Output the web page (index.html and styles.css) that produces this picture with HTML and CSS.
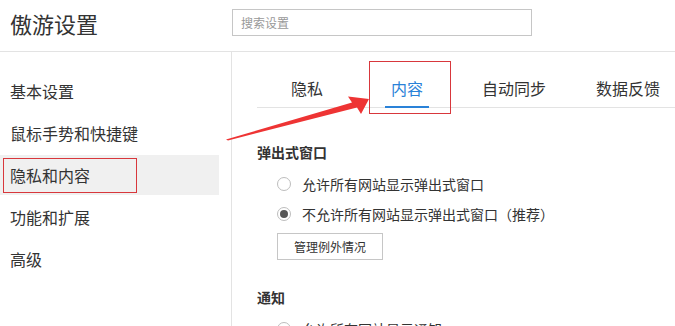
FILE: index.html
```html
<!DOCTYPE html>
<html lang="zh-CN">
<head>
<meta charset="utf-8">
<title>傲游设置</title>
<link rel="stylesheet" href="styles.css">
</head>
<body>
<div class="page">
  <header class="header">
    <div class="brand">傲游设置</div>
    <div class="search">搜索设置</div>
  </header>
  <div class="body">
    <nav class="sidebar">
      <div class="nav-item">基本设置</div>
      <div class="nav-item">鼠标手势和快捷键</div>
      <div class="nav-item active">隐私和内容</div>
      <div class="nav-item">功能和扩展</div>
      <div class="nav-item">高级</div>
    </nav>
    <main class="main">
      <div class="tabs">
        <div class="tab"><span class="tab-label">隐私</span></div>
        <div class="tab active"><span class="tab-label">内容</span></div>
        <div class="tab"><span class="tab-label">自动同步</span></div>
        <div class="tab"><span class="tab-label">数据反馈</span></div>
      </div>
      <section class="section">
        <h3 class="section-title">弹出式窗口</h3>
        <div class="options">
          <div class="option"><span class="radio"></span><span>允许所有网站显示弹出式窗口</span></div>
          <div class="option"><span class="radio checked"></span><span>不允许所有网站显示弹出式窗口<span class="paren">（</span>推荐<span class="paren">）</span></span></div>
          <button class="btn">管理例外情况</button>
        </div>
      </section>
      <section class="section second">
        <h3 class="section-title">通知</h3>
        <div class="options">
          <div class="option"><span class="radio"></span><span>允许所有网站显示通知</span></div>
        </div>
      </section>
    </main>
  </div>
  <div class="mark mark-nav"></div>
  <div class="mark mark-tab"></div>
  <svg class="arrow" width="675" height="326" viewBox="0 0 675 326">
    <polygon points="226,139.5 352,102.5 348,96.5 369,99 361,114 357,107.5 228,140.5" fill="#ee3434"/>
  </svg>
</div>
</body>
</html>
```
FILE: styles.css
```css
* { box-sizing: border-box; }
html, body { margin: 0; padding: 0; background: #fff; }
body {
  font-family: "Noto Sans CJK SC", "Noto Sans", sans-serif;
  color: #333;
  width: 675px;
  height: 326px;
  overflow: hidden;
}
.page { position: relative; width: 675px; height: 326px; overflow: hidden; }

.header {
  display: flex;
  align-items: flex-start;
  height: 52px;
  border-bottom: 1px solid #e3e3e3;
}
.brand {
  width: 232px;
  padding-left: 10px;
  margin-top: 8px;
  font-size: 22px;
  line-height: 30px;
  color: #333;
}
.search {
  margin-top: 9px;
  width: 300px;
  height: 27px;
  border: 1px solid #c6c6c6;
  font-size: 12px;
  line-height: 25px;
  padding-left: 8px;
  color: #999;
}

.body { display: flex; height: 274px; }
.sidebar {
  width: 232px;
  flex: none;
  border-right: 1px solid #e3e3e3;
  padding-top: 19px;
  padding-right: 12px;
}
.nav-item {
  height: 40px;
  line-height: 40px;
  margin-bottom: 2px;
  padding-left: 10px;
  font-size: 16px;
  color: #333;
}
.nav-item.active { background: #f0f0f0; }

.main { flex: 1; min-width: 0; padding-left: 25px; overflow: hidden; }
.tabs {
  display: flex;
  flex-wrap: nowrap;
  margin-top: 18px;
  border-bottom: 1px solid #e3e3e3;
}
.tab {
  flex: none;
  min-width: 100px;
  padding: 0 19px;
  display: flex;
  justify-content: center;
  white-space: nowrap;
}
.tab-label {
  display: block;
  padding: 0 6px;
  font-size: 16px;
  line-height: 36px;
  border-bottom: 2px solid transparent;
  margin-bottom: -1px;
  color: #333;
}
.tab.active .tab-label { color: #2a82d8; border-bottom-color: #2a82d8; }

.section { margin-top: 34px; }
.section.second { margin-top: 27px; }
.section-title {
  margin: 0;
  font-size: 14px;
  line-height: 20px;
  font-weight: bold;
  color: #333;
}
.options { padding-left: 20px; margin-top: 7px; }
.option {
  display: flex;
  align-items: center;
  height: 30px;
  font-size: 14px;
  color: #333;
  white-space: nowrap;
}
.paren { display: inline-block; width: 14px; text-align: center; }
.radio {
  width: 14px;
  height: 14px;
  border: 1px solid #bdbdbd;
  border-radius: 50%;
  margin-right: 11px;
  display: flex;
  align-items: center;
  justify-content: center;
  flex: none;
}
.radio.checked::after {
  content: "";
  width: 8px;
  height: 8px;
  border-radius: 50%;
  background: #555;
}
.btn {
  display: block;
  margin-top: 4px;
  width: 106px;
  height: 27px;
  border: 1px solid #c6c6c6;
  background: #fff;
  font-family: inherit;
  font-size: 12px;
  color: #333;
  padding: 0;
}

.mark { position: absolute; border: 1.5px solid #d8373c; }
.mark-nav { left: 3px; top: 158px; width: 134px; height: 35px; }
.mark-tab { left: 369px; top: 61px; width: 82px; height: 53px; }
.arrow { position: absolute; left: 0; top: 0; pointer-events: none; }
```
